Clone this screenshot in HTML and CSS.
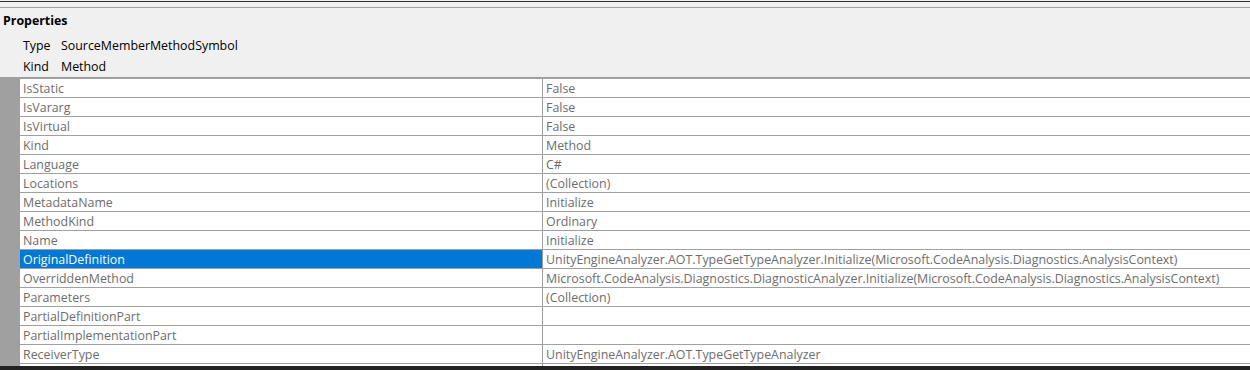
FILE: index.html
```html
<!DOCTYPE html>
<html>
<head>
<meta charset="utf-8">
<link rel="stylesheet" href="styles.css">
</head>
<body>
<div class="topline"></div>
<div class="header">
  <div class="title">Properties</div>
  <div class="meta"><span class="mk">Type</span><span>SourceMemberMethodSymbol</span></div>
  <div class="meta"><span class="mk">Kind</span><span>Method</span></div>
</div>
<div class="grid">
  <div class="gutter"></div>
  <div class="rows">
    <div class="row"><div class="name">IsStatic</div><div class="val">False</div></div>
    <div class="row"><div class="name">IsVararg</div><div class="val">False</div></div>
    <div class="row"><div class="name">IsVirtual</div><div class="val">False</div></div>
    <div class="row"><div class="name">Kind</div><div class="val">Method</div></div>
    <div class="row"><div class="name">Language</div><div class="val">C#</div></div>
    <div class="row"><div class="name">Locations</div><div class="val">(Collection)</div></div>
    <div class="row"><div class="name">MetadataName</div><div class="val">Initialize</div></div>
    <div class="row"><div class="name">MethodKind</div><div class="val">Ordinary</div></div>
    <div class="row"><div class="name">Name</div><div class="val">Initialize</div></div>
    <div class="row sel"><div class="name">OriginalDefinition</div><div class="val">UnityEngineAnalyzer.AOT.TypeGetTypeAnalyzer.Initialize(Microsoft.CodeAnalysis.Diagnostics.AnalysisContext)</div></div>
    <div class="row"><div class="name">OverriddenMethod</div><div class="val">Microsoft.CodeAnalysis.Diagnostics.DiagnosticAnalyzer.Initialize(Microsoft.CodeAnalysis.Diagnostics.AnalysisContext)</div></div>
    <div class="row"><div class="name">Parameters</div><div class="val">(Collection)</div></div>
    <div class="row"><div class="name">PartialDefinitionPart</div><div class="val"></div></div>
    <div class="row"><div class="name">PartialImplementationPart</div><div class="val"></div></div>
    <div class="row"><div class="name">ReceiverType</div><div class="val">UnityEngineAnalyzer.AOT.TypeGetTypeAnalyzer</div></div>
    <div class="row last"><div class="name"></div><div class="val"></div></div>
  </div>
</div>
<div class="bottomline"></div>
</body>
</html>
```

FILE: styles.css
```css
html, body {
  margin: 0;
  padding: 0;
  width: 1250px;
  height: 370px;
  overflow: hidden;
  background: #f0f0f0;
  font-family: "Open Sans", "Noto Sans", sans-serif;
  font-size: 12.4px;
}
.topline {
  height: 1px;
  border-bottom: 1px solid #333;
  background: #f0f0f0;
}
.header {
  padding-top: 5px;
  border-bottom: 2px solid #a0a0a0;
  background: #f0f0f0;
}
.header::before {
  content: "";
  display: block;
  height: 1px;
  background: #a0a0a0;
}
.title {
  font-weight: bold;
  color: #000;
  padding-left: 3px;
  height: 24px;
  line-height: 24px;
  margin-top: 1px;
  margin-bottom: 2px;
}
.meta {
  color: #000;
  padding-left: 23px;
  height: 21px;
  line-height: 21px;
}
.mk {
  display: inline-block;
  width: 38px;
}
.grid {
  display: flex;
  background: #fff;
  height: 287px;
  overflow: hidden;
}
.gutter {
  width: 20px;
  background: #a0a0a0;
  flex: none;
}
.rows {
  flex: 1;
  display: flex;
  flex-direction: column;
}
.row {
  display: flex;
  height: 17px;
  padding-top: 1px;
  border-bottom: 1px solid #a0a0a0;
  flex: none;
  color: #6d6d6d;
  line-height: 18px;
}
.name {
  width: 523px;
  margin-top: -1px;
  padding-top: 1px;
  height: 18px;
  padding-left: 3px;
  box-sizing: border-box;
  border-right: 1px solid #a0a0a0;
  flex: none;
  white-space: nowrap;
}
.val {
  flex: 1;
  padding-left: 3px;
  white-space: nowrap;
}
.sel .name {
  background: #0078d7;
  color: #fff;
}
.row.last {
  border-bottom: none;
}
.bottomline {
  height: 4px;
  background: #222;
}
```
